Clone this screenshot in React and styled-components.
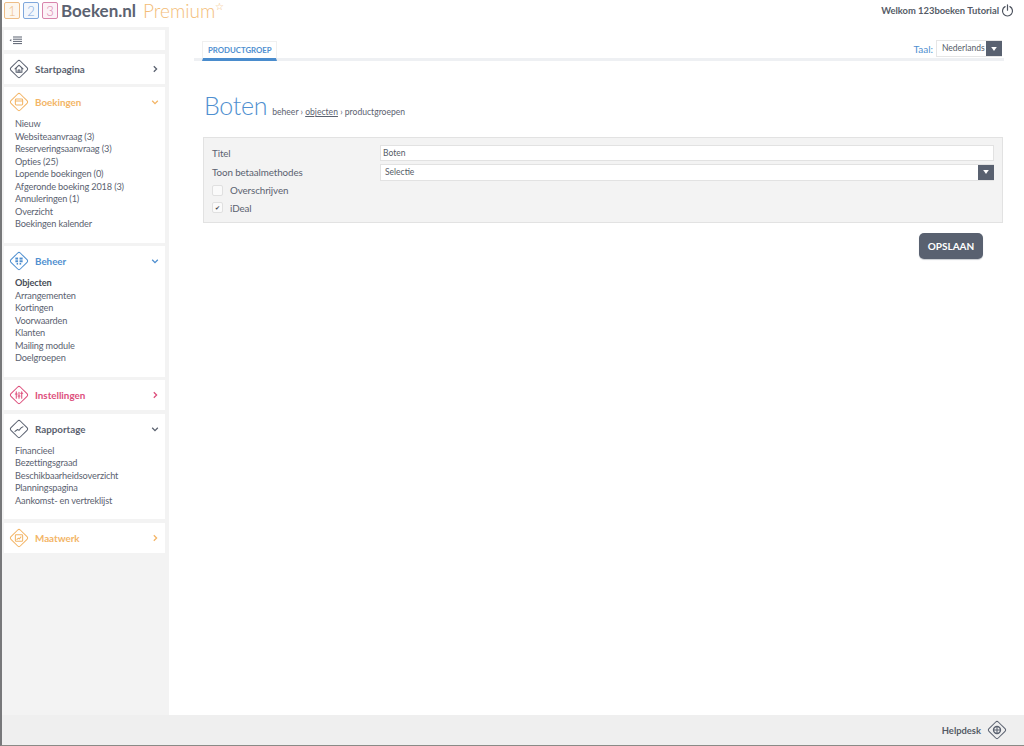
import styled, { createGlobalStyle } from 'styled-components';

const GlobalStyle = createGlobalStyle`
   html, body {
      margin: 0;
      padding: 0;
      height: 100%;
      background: #fff;
   }

   body {
      font-family: "Lato", "Open Sans", sans-serif;
      color: #555b66;
   }
`;

const colors = {
   grey: '#5b6270',
   orange: '#f3b566',
   blue: '#4f8fd0',
   pink: '#dd4f7c',
};

const bookings = [
   'Nieuw',
   'Websiteaanvraag (3)',
   'Reserveringsaanvraag (3)',
   'Opties (25)',
   'Lopende boekingen (0)',
   'Afgeronde boeking 2018 (3)',
   'Annuleringen (1)',
   'Overzicht',
   'Boekingen kalender',
];

const management = ['Objecten', 'Arrangementen', 'Kortingen', 'Voorwaarden', 'Klanten', 'Mailing module', 'Doelgroepen'];

const reports = ['Financieel', 'Bezettingsgraad', 'Beschikbaarheidsoverzicht', 'Planningspagina', 'Aankomst- en vertreklijst'];

const Diamond = ({ color, children, size = 20 }) => (
   <svg width={size} height={size} viewBox="0 0 22 22" fill="none" stroke={color} strokeWidth="1.15" strokeLinejoin="round" strokeLinecap="round">
      <path d="M9.6 2.2 Q11 0.8 12.4 2.2 L19.8 9.6 Q21.2 11 19.8 12.4 L12.4 19.8 Q11 21.2 9.6 19.8 L2.2 12.4 Q0.8 11 2.2 9.6 Z" />
      {children}
   </svg>
);

const HomeGlyph = () => (
   <>
      <path d="M6.6 11 L11 6.8 L15.4 11" />
      <path d="M7.8 10.2 V14.6 H14.2 V10.2" />
      <path d="M10 14.6 V12 H12 V14.6" />
   </>
);

const BookingGlyph = () => (
   <>
      <rect x="7" y="7.8" width="8" height="6.4" rx="1" />
      <path d="M7 9.8 H15" />
   </>
);

const ManageGlyph = () => (
   <g fill="#4f8fd0" stroke="none">
      <rect x="7" y="7.2" width="3" height="2.2" />
      <rect x="7" y="10.2" width="3" height="2.2" />
      <rect x="8.4" y="13.2" width="1.6" height="1.8" />
      <rect x="11.6" y="7.2" width="3.4" height="2.2" />
      <rect x="11.6" y="10.2" width="3.4" height="2.2" />
      <rect x="11.6" y="13.2" width="1.8" height="1.8" />
   </g>
);

const SettingsGlyph = () => (
   <path d="M8 7.4 V14.6 M6.9 9.8 H9.1 M11 8 V14.6 M9.9 12 H12.1 M14 7.4 V14.6 M12.9 9 H15.1" />
);

const ReportGlyph = () => (
   <path d="M6.6 13.6 L9.4 11.6 L11.2 12.4 L13.4 9.6 L15.4 8.6" strokeDasharray="1.6 0.6" />
);

const CustomGlyph = () => (
   <>
      <rect x="7" y="7.4" width="8" height="7.2" rx="0.8" />
      <path d="M8.8 12.6 L10.4 11.2 L11.4 12 L13.2 9.8" />
   </>
);

const Chevron = ({ color, open }) => (
   <svg width="8" height="8" viewBox="0 0 8 8" fill="none" stroke={color} strokeWidth="1.3">
      <path d={open ? 'M1.2 2.8 L4 5.6 L6.8 2.8' : 'M2.8 1.2 L5.6 4 L2.8 6.8'} />
   </svg>
);

const NavCard = ({ title, color, glyph, items, active }) => (
   <Card $open={!!items}>
      <CardHead>
         <Diamond color={color}>{glyph}</Diamond>
         <CardTitle $color={color}>{title}</CardTitle>
         <Chevron color={color} open={!!items} />
      </CardHead>
      {items && (
         <ItemList>
            {items.map((item) => (
               <Item key={item} $active={item === active}>{item}</Item>
            ))}
         </ItemList>
      )}
   </Card>
);

const Arrow = () => (
   <SelectArrow>
      <svg width="6" height="4" viewBox="0 0 7 5"><path d="M0 0 H7 L3.5 5 Z" fill="#fff" /></svg>
   </SelectArrow>
);

const App = () => {
   return (
      <Page>
         <GlobalStyle />
         <Header>
            <Logo>
               <LogoBox $color="#eebd86" $fill="#fdf7ef">1</LogoBox>
               <LogoBox $color="#7fa7dc" $fill="#f3f7fc">2</LogoBox>
               <LogoBox $color="#d884ac" $fill="#fcf2f7">3</LogoBox>
               <Brand>Boeken.nl</Brand>
               <Premium>Premium<Star>☆</Star></Premium>
            </Logo>
            <Welcome>
               Welkom 123boeken Tutorial
               <svg width="13" height="13" viewBox="0 0 14 14" fill="none" stroke="#4f5560" strokeWidth="1.3" strokeLinecap="round">
                  <path d="M4.4 2.8 A5.4 5.4 0 1 0 9.6 2.8" />
                  <path d="M7 1 V6.6" />
               </svg>
            </Welcome>
         </Header>

         <Body>
            <Sidebar>
               <ToggleRow>
                  <svg width="14" height="9" viewBox="0 0 14 9" fill="none" stroke="#5b6270" strokeWidth="1">
                     <path d="M4 1 H13 M4 3.2 H13 M4 5.4 H13 M4 7.6 H13" />
                     <path d="M0.5 4.3 L2.3 3 V5.6 Z" fill="#5b6270" stroke="none" />
                  </svg>
               </ToggleRow>
               <NavCard title="Startpagina" color={colors.grey} glyph={<HomeGlyph />} />
               <NavCard title="Boekingen" color={colors.orange} glyph={<BookingGlyph />} items={bookings} />
               <NavCard title="Beheer" color={colors.blue} glyph={<ManageGlyph />} items={management} active="Objecten" />
               <NavCard title="Instellingen" color={colors.pink} glyph={<SettingsGlyph />} />
               <NavCard title="Rapportage" color={colors.grey} glyph={<ReportGlyph />} items={reports} />
               <NavCard title="Maatwerk" color={colors.orange} glyph={<CustomGlyph />} />
            </Sidebar>

            <Main>
               <TabBar>
                  <Tab>PRODUCTGROEP</Tab>
                  <Language>
                     <LanguageLabel>Taal:</LanguageLabel>
                     <LanguageSelect>
                        <span>Nederlands</span>
                        <Arrow />
                     </LanguageSelect>
                  </Language>
               </TabBar>

               <TitleRow>
                  <Title>Boten</Title>
                  <Crumbs>beheer › <u>objecten</u> › productgroepen</Crumbs>
               </TitleRow>

               <Panel>
                  <FormRow>
                     <FieldLabel>Titel</FieldLabel>
                     <TextField>Boten</TextField>
                  </FormRow>
                  <FormRow>
                     <FieldLabel>Toon betaalmethodes</FieldLabel>
                     <SelectField>
                        <span>Selectie</span>
                        <Arrow />
                     </SelectField>
                  </FormRow>
                  <CheckRow>
                     <CheckBox />
                     Overschrijven
                  </CheckRow>
                  <CheckRow>
                     <CheckBox>✔</CheckBox>
                     iDeal
                  </CheckRow>
               </Panel>

               <Actions>
                  <SaveButton>OPSLAAN</SaveButton>
               </Actions>
            </Main>
         </Body>

         <Footer>
            Helpdesk
            <Diamond color={colors.grey} size={20}>
               <circle cx="11" cy="11" r="3.8" strokeWidth="1.6" />
               <path d="M7.4 11 H14.6 M11 7.4 V14.6" />
            </Diamond>
         </Footer>
      </Page>
   );
};

const Page = styled.div`
   display: flex;
   flex-direction: column;
   height: 746px;
   overflow: hidden;
   border-left: 2px solid #77787a;
   border-bottom: 1px solid #8a8a86;
   box-sizing: border-box;
`;

const Header = styled.header`
   display: flex;
   justify-content: space-between;
   align-items: center;
   height: 27px;
   flex: none;
   padding: 0 10px 6px 2px;
   box-sizing: border-box;
   background: #fff;
`;

const Logo = styled.div`
   display: flex;
   align-items: center;
   gap: 3px;
`;

const LogoBox = styled.span`
   display: flex;
   justify-content: center;
   align-items: center;
   width: 16px;
   height: 17px;
   box-sizing: border-box;
   border: 1px solid ${(p) => p.$color};
   border-radius: 2px;
   color: ${(p) => p.$color};
   background: ${(p) => p.$fill};
   font-size: 13px;
   font-weight: 300;
`;

const Brand = styled.span`
   font-size: 17px;
   font-weight: 700;
   color: #5b6270;
`;

const Premium = styled.span`
   position: relative;
   margin-left: 4px;
   font-size: 19px;
   line-height: 20px;
   font-weight: 300;
   color: #f3bd78;
`;

const Star = styled.span`
   position: absolute;
   top: 0;
   font-size: 10px;
   line-height: 1;
`;

const Welcome = styled.div`
   display: flex;
   align-items: center;
   gap: 2px;
   font-size: 9.4px;
   font-weight: 700;
   color: #555b66;
`;

const Body = styled.div`
   display: flex;
   flex: 1;
   min-height: 0;
`;

const Sidebar = styled.aside`
   display: flex;
   flex-direction: column;
   gap: 3.5px;
   width: 166px;
   flex: none;
   padding: 3px 3px 0 2px;
   box-sizing: border-box;
   background: #f3f3f3;
`;

const ToggleRow = styled.div`
   display: flex;
   align-items: center;
   height: 20px;
   flex: none;
   padding-left: 5px;
   background: #fff;
`;

const Card = styled.section`
   background: #fff;
   padding-bottom: ${(p) => (p.$open ? '12px' : '0')};
`;

const CardHead = styled.div`
   display: flex;
   align-items: center;
   gap: 6px;
   height: 30px;
   padding: 0 6px 0 5px;
`;

const CardTitle = styled.span`
   flex: 1;
   font-size: 9.8px;
   font-weight: 700;
   color: ${(p) => p.$color};
`;

const ItemList = styled.ul`
   list-style: none;
   margin: 0;
   padding: 1px 0 0 11px;
`;

const Item = styled.li`
   height: 12.5px;
   line-height: 12.5px;
   font-size: 9.2px;
   letter-spacing: -0.15px;
   font-weight: ${(p) => (p.$active ? 700 : 400)};
   color: ${(p) => (p.$active ? '#484d57' : '#5b6270')};
   white-space: nowrap;
`;

const Main = styled.main`
   flex: 1;
   padding: 8px 20px 0 25px;
   background: #fff;
   border-left: 1px solid #f3f3f3;
`;

const TabBar = styled.div`
   display: flex;
   justify-content: space-between;
   align-items: flex-end;
   padding-left: 8px;
   height: 23px;
   border-bottom: 3px solid #eef0f3;
`;

const Tab = styled.div`
   position: relative;
   top: 3px;
   height: 20px;
   padding: 0 4px 0 5px;
   line-height: 17px;
   font-size: 7.8px;
   font-weight: 700;
   color: #4f8fd0;
   box-sizing: border-box;
   border: 1px solid #f0f0f0;
   border-bottom: 3px solid #4a8ccd;
`;

const Language = styled.div`
   display: flex;
   align-items: center;
   gap: 3px;
   margin: 0 2px 1px 0;
`;

const LanguageLabel = styled.span`
   font-size: 10px;
   color: #4f8fd0;
`;

const LanguageSelect = styled.div`
   display: flex;
   justify-content: space-between;
   align-items: stretch;
   width: 66px;
   height: 17px;
   box-sizing: border-box;
   padding-left: 5px;
   line-height: 15px;
   font-size: 8.5px;
   background: #fff;
   border: 1px solid #e6e6e6;
   border-right: none;
`;

const SelectArrow = styled.span`
   display: flex;
   justify-content: center;
   align-items: center;
   width: 16px;
   background: #596170;
`;

const TitleRow = styled.div`
   display: flex;
   align-items: baseline;
   gap: 5px;
   margin: 29px 0 0 10px;
   height: 47px;
`;

const Title = styled.h1`
   margin: 0;
   font-size: 25px;
   letter-spacing: -0.3px;
   font-weight: 300;
   color: #4f8fd0;
`;

const Crumbs = styled.span`
   font-size: 8.6px;
   color: #5b6270;
`;

const Panel = styled.div`
   display: flex;
   flex-direction: column;
   margin-left: 9px;
   width: 800px;
   height: 86px;
   box-sizing: border-box;
   padding: 7px 8px 0 8px;
   background: #f3f3f3;
   border: 1px solid #e2e2e2;
`;

const FormRow = styled.div`
   display: grid;
   grid-template-columns: 168px 1fr;
   align-items: center;
   margin-bottom: 2.5px;
`;

const FieldLabel = styled.span`
   font-size: 9.8px;
   letter-spacing: -0.1px;
   color: #5b6270;
`;

const TextField = styled.div`
   height: 16px;
   padding-left: 2px;
   line-height: 14px;
   font-size: 8.5px;
   box-sizing: border-box;
   background: #fff;
   border: 1px solid #e2e2e2;
`;

const SelectField = styled.div`
   display: flex;
   justify-content: space-between;
   align-items: stretch;
   height: 17px;
   padding-left: 4px;
   line-height: 15px;
   font-size: 8.5px;
   box-sizing: border-box;
   background: #fff;
   border: 1px solid #e2e2e2;
   border-right: none;
`;

const CheckRow = styled.div`
   display: flex;
   align-items: center;
   gap: 7px;
   height: 17.5px;
   font-size: 9.8px;
   letter-spacing: -0.1px;
   color: #5b6270;

   ${FormRow} + & {
      margin-top: -1.5px;
   }
`;

const CheckBox = styled.span`
   display: flex;
   justify-content: center;
   align-items: center;
   width: 11px;
   height: 11px;
   box-sizing: border-box;
   font-size: 6px;
   line-height: 1;
   color: #3f444d;
   background: #fafafa;
   border: 1px solid #e0e0e0;
   border-radius: 2px;
`;

const Actions = styled.div`
   display: flex;
   justify-content: flex-end;
   margin: 10px 21px 0 0;
`;

const SaveButton = styled.button`
   width: 64px;
   height: 26px;
   padding: 0;
   font-family: inherit;
   font-size: 10px;
   font-weight: 700;
   color: #fff;
   background: #596170;
   border: none;
   border-radius: 5px;
   box-shadow: 0 1px 1px #c9ccd1;
   cursor: pointer;
`;

const Footer = styled.footer`
   display: flex;
   justify-content: flex-end;
   align-items: center;
   gap: 6px;
   height: 30px;
   flex: none;
   padding-right: 17px;
   font-size: 9.4px;
   font-weight: 700;
   color: #555b66;
   background: #efefef;
`;

export default App;
